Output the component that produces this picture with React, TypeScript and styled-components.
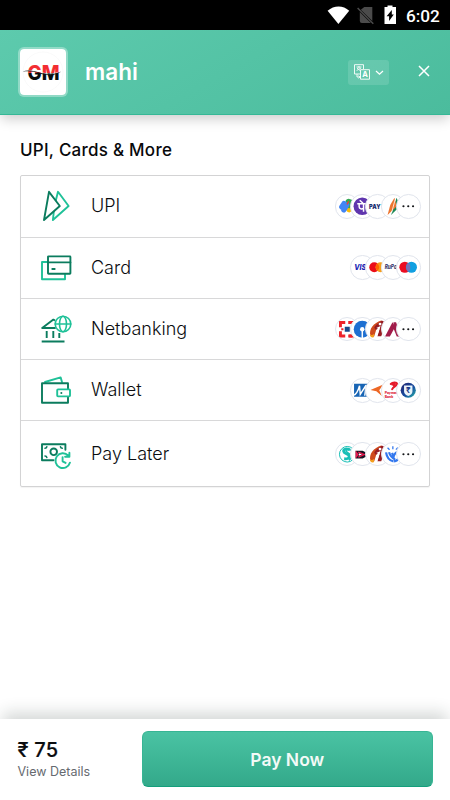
import React from "react";
import styled, { createGlobalStyle } from "styled-components";

const GlobalStyle = createGlobalStyle`
  * { box-sizing: border-box; }
  body { margin: 0; background: #fff; font-family: Inter, sans-serif; color: #0b0d10; }
  svg { display: block; flex: none; }
`;

const DARK = "#0b7c5e";
const LIGHT = "#1fc198";

const Screen = styled.div`
  display: flex;
  flex-direction: column;
  width: 450px;
  height: 800px;
  overflow: hidden;
  background: #fff;
`;

const StatusBar = styled.div`
  display: flex;
  align-items: center;
  justify-content: flex-end;
  flex: none;
  height: 30px;
  padding-right: 10px;
  background: #000;
`;

const Clock = styled.span`
  width: 34px;
  margin-left: 9px;
  padding-top: 2px;
  color: #fff;
  font: 500 17.2px/20px Roboto, sans-serif;
  white-space: nowrap;
`;

const Header = styled.header`
  display: flex;
  align-items: center;
  flex: none;
  height: 85px;
  padding: 0 18px 0 17.5px;
  background: linear-gradient(150deg, #5dcaad 0%, #4bbc9d 100%);
  border-bottom: 1px solid #35b896;
  box-shadow: 0 5px 12px -1px rgba(0, 0, 0, 0.2);
`;

const LogoTile = styled.div`
  display: flex;
  align-items: center;
  justify-content: center;
  width: 50px;
  height: 50px;
  background: #fff;
  background-clip: padding-box;
  border: 2.5px solid rgba(255, 255, 255, 0.34);
  border-radius: 6px;
`;

const Merchant = styled.h1`
  flex: 1;
  margin: 0 0 0 17.5px;
  color: #fff;
  font-size: 22.5px;
  font-weight: 600;
  line-height: 28px;
`;

const LanguageButton = styled.button`
  display: flex;
  align-items: center;
  gap: 4px;
  width: 41px;
  height: 25px;
  margin-right: 27px;
  padding: 0 0 0 5px;
  background: rgba(255, 255, 255, 0.13);
  border: 0;
  border-radius: 3px;
`;

const CloseButton = styled.button`
  width: 16px;
  height: 16px;
  padding: 0;
  margin-bottom: 3px;
  background: none;
  border: 0;
`;

const Content = styled.main`
  flex: 1;
  padding: 24px 20px 0;
`;

const SectionTitle = styled.h2`
  margin: 0 0 14px;
  color: #08090b;
  font-size: 17px;
  font-weight: 500;
  line-height: 22px;
  letter-spacing: 0.25px;
`;

const MethodList = styled.div`
  border: 1px solid #d3d3d4;
  border-radius: 2px;
  box-shadow: 0 1px 1px rgba(0, 0, 0, 0.05);
`;

const MethodRow = styled.div<{ $height: number }>`
  display: flex;
  align-items: center;
  height: ${(p) => p.$height}px;
  padding: 0 8.5px 0 19px;
  border-bottom: 1px solid #d8d8d9;
  &:last-child { border-bottom: 0; }
`;

const MethodName = styled.span`
  flex: 1;
  margin-left: 19px;
  font-size: 18px;
  font-weight: 300;
  line-height: 24px;
`;

const Badges = styled.div`
  display: flex;
`;

const Badge = styled.div`
  display: flex;
  width: 24.5px;
  height: 24.5px;
  background: #fff;
  border: 1px solid #e1e5ed;
  border-radius: 50%;
  overflow: hidden;
  & + & { margin-left: -9.2px; }
`;

const Footer = styled.footer`
  display: flex;
  flex: none;
  height: 81px;
  padding: 12px 17.5px 0;
  background: #fff;
  box-shadow: 0 -9px 15px -3px rgba(28, 40, 36, 0.19);
`;

const Total = styled.div`
  width: 124.5px;
  padding-top: 7px;
`;

const Amount = styled.div`
  font-size: 20px;
  font-weight: 500;
  line-height: 25px;
  letter-spacing: 0.25px;
  -webkit-text-stroke: 0.2px currentColor;
`;

const Details = styled.div`
  margin-top: 1px;
  color: #666a70;
  font-size: 12.5px;
  line-height: 16px;
`;

const PayButton = styled.button`
  flex: 1;
  height: 56px;
  padding: 0;
  color: #f3faf7;
  background: linear-gradient(#4ac3a3, #33a98a);
  border: 1px solid #37b594;
  border-bottom-color: #149f7c;
  border-radius: 6px;
  font: 600 17.5px Inter, sans-serif;
`;

const stroke = { fill: "none", strokeWidth: 1.9, strokeLinejoin: "round", strokeLinecap: "round" } as const;

const methodIcons: Record<string, React.ReactNode> = {
  upi: (
    <>
      <path stroke={LIGHT} d="M18 1.8 28.6 16 12.9 30 14.4 16Z" />
      <path stroke={DARK} fill="#fff" d="M9 1.8 19.8 16 4 30Z" />
    </>
  ),
  card: (
    <>
      <path stroke={LIGHT} d="M7 10H2v17.2h23v-4.5" />
      <rect stroke={DARK} x="8" y="4.4" width="22.4" height="17.4" rx="0.5" />
      <path stroke={DARK} d="M8 10.4h22.4M12.3 17h2.4" />
    </>
  ),
  bank: (
    <>
      <path stroke={DARK} strokeLinecap="butt" d="M15.7 15H2.2L13.4 6.6 15 7.5M6.7 18V25M13.3 18V25M19.3 20V25M1.7 28.5h22.8" />
      <g stroke={LIGHT} strokeWidth="1.6">
        <circle cx="23" cy="11" r="7.8" />
        <ellipse cx="23" cy="11" rx="3.5" ry="7.8" />
        <path d="M15.2 11h15.6" />
      </g>
    </>
  ),
  wallet: (
    <>
      <path stroke={LIGHT} d="m5 8 15.6-4.6L22 8" />
      <path stroke={DARK} d="M28 15V9.3H2v19.5h26V23" />
      <rect stroke={LIGHT} x="17.2" y="15.4" width="12.8" height="7" rx="0.8" />
      <path stroke={DARK} d="M21.3 19h.1" />
    </>
  ),
  later: (
    <>
      <path stroke={DARK} d="M13.5 22.2H2V6.2h23.4v5.5" />
      <circle stroke={DARK} cx="13.7" cy="13.8" r="3.3" />
      <path stroke={DARK} strokeWidth="1.6" d="M5 10.2c1 0 1.6-.5 1.8-1.4M20.5 8.8c.2 1 .8 1.4 1.8 1.4M5 18c1 0 1.6.5 1.8 1.4" />
      <path stroke={LIGHT} d="M28.2 17.5A7.4 7.4 0 1 0 30 24.6M29.4 14.8v4h-4.3M22.6 19.1v4.2l3 1.6" />
    </>
  ),
};

const MethodIcon = ({ name }: { name: string }) => (
  <svg width="32" height="32" viewBox="0 0 32 32" {...stroke}>
    {methodIcons[name]}
  </svg>
);

const flame = (
  <>
    <path d="M5.2 18.5C3.3 12 8.5 5.5 16 3.3c1 3-3 3-4.5 7.5L9 19c-1.5 1-3 1-3.8-.5Z" fill="#cf4a1d" />
    <path d="M4.8 16.5c.7 1.8 2.4 1.7 4.2 0L8.4 20c-2 .8-4-.8-3.6-3.5Z" fill="#f5a01b" />
    <path d="M9 10.5c2-4 5.5-5 7.5-7.2 3.2.8 3.5 4.2 2.5 7L16 19h-4l2.5-8-4 1.5Z" fill="#981c22" />
    <circle cx="14.8" cy="6.8" r="1.4" fill="#fff" />
    <path d="m11 10.8 4.3-2-3.3 10.4h-2.2l2.6-8.3Z" fill="#fff" />
  </>
);

const brandMarks: Record<string, React.ReactNode> = {
  gpay: (
    <g strokeWidth="5.2" strokeLinecap="round">
      <path d="m13 7.2 2.3 4" stroke="#34a853" />
      <path d="m13.8 15.5 2-3.5" stroke="#fbbc04" />
      <path d="M14.8 7.5v4" stroke="#34a853" />
      <path d="m6.5 12.7 2.2-3.4" stroke="#4285f4" />
      <path d="m8.6 15.8 2.9-5" stroke="#4285f4" />
      <path d="m12 9.6 1.2-2" stroke="#ea4335" strokeWidth="1.5" />
    </g>
  ),
  phonepe: (
    <>
      <circle cx="12" cy="12" r="8.7" fill="#5f35ae" />
      <path d="M7 9.4h8.5M13.3 9.4v8M8.9 9.4v3.1c0 2.4 2.7 2.5 4.4 1.6M12.8 9l-3.3-3" fill="none" stroke="#fff" strokeWidth="1.5" />
    </>
  ),
  paytm: (
    <>
      <defs>
        <linearGradient id="wordmark" gradientUnits="userSpaceOnUse" x1="4" y1="0" x2="20" y2="0">
          <stop offset=".66" stopColor="#172e70" /><stop offset=".66" stopColor="#1eb5e9" />
        </linearGradient>
      </defs>
      <text x="3.8" y="14.3" fontSize="5.6" fontWeight="900" fill="url(#wordmark)">PAYTM</text>
    </>
  ),
  bhim: (
    <>
      <path d="m15.3 3.5 3.4 8.5-8.9 8.8Z" fill="#1b8754" />
      <path d="m13.2 3.5 2.3 8.5-9.2 8.8 2.7-10Z" fill="#ed752e" />
      <path d="m14 5-3.8 14" stroke="#fff" strokeWidth=".8" />
    </>
  ),
  more: (
    <g fill="#15171a"><circle cx="7.2" cy="12" r="1.1" /><circle cx="12" cy="12" r="1.1" /><circle cx="16.8" cy="12" r="1.1" /></g>
  ),
  visa: (
    <text x="4" y="15" fontSize="8" fontWeight="800" fontStyle="italic" fill="#1724b5" textLength="17" lengthAdjust="spacingAndGlyphs">VISA</text>
  ),
  mastercard: (
    <><circle cx="9" cy="12" r="5" fill="#eb0d18" /><circle cx="15.3" cy="12" r="5" fill="#f79e1b" /><path d="M12.2 8.2a5 5 0 0 1 0 7.6 5 5 0 0 1 0-7.6Z" fill="#ff6500" /></>
  ),
  rupay: (
    <text x="3.5" y="14" fontSize="5.6" fontWeight="800" fontStyle="italic" fill="#34366c" textLength="15" lengthAdjust="spacingAndGlyphs">RuPay</text>
  ),
  maestro: (
    <><circle cx="8.6" cy="12" r="5.5" fill="#eb0d22" /><circle cx="15.2" cy="12" r="5.5" fill="#109fe1" /><path d="M12 7.6a5.5 5.5 0 0 1 0 8.8 5.5 5.5 0 0 1 0-8.8Z" fill="#7673b8" /></>
  ),
  kotak: (
    <>
      <path d="M10 5.2H5.2V10M5.2 14v4.8H10M14 5.2h4.8V10M14 18.8h4.8V14" fill="none" stroke="#ed232a" strokeWidth="2.9" />
      <path d="M6 10.9h2.2v2.2H6z" fill="#ed232a" />
      <path d="M13 3.8h4v2.9h-4zM13 17.3h4v2.9h-4z" fill="#ed232a" />
      <path d="M9.5 9.5h5v5h-5Z" fill="#174788" />
    </>
  ),
  sbi: (
    <><circle cx="12" cy="12" r="8.5" fill="#1d6fd1" /><circle cx="12" cy="12" r="2.2" fill="#fff" /><path d="M11.3 13h1.5v8h-1.5z" fill="#fff" /></>
  ),
  icici: flame,
  axis: (
    <><path d="m11.2 5 2.8 4.4-5.4 9.8H3.8Z" fill="#a11c4a" /><path d="M12.2 5h2.6l5.3 14.2h-4.6l-2.8-7Z" fill="#a11c4a" /></>
  ),
  mobikwik: (
    <><path d="M3.8 5.5h16.4v13H3.8Z" fill="#1764b4" /><path d="M3.8 16.8c2.8-1.2 4-4.2 5.5-9.3l.7 8.6L15.8 7l-1.3 10.5M18 6l-.8 13" fill="none" stroke="#fff" strokeWidth="1.4" /></>
  ),
  freecharge: (
    <path d="M5.2 11.8 18 6.2l-4 5.7 2.6 5.9-5.5-4.7Z" fill="#ed6725" />
  ),
  airtel: (
    <>
      <path d="M9.5 5.7c2-2.2 6.5-2 6.3.2-.2 2-4.1 2.4-4.9 5.1M11 6.3c2-1 3.5-.5 1.6 1.2" fill="none" stroke="#e51b2b" strokeWidth="2" strokeLinecap="round" />
      <text x="3.5" y="15.4" fontSize="3.4" fontWeight="800" fill="#dc2331">Payments</text>
      <text x="3.5" y="19.4" fontSize="3.4" fontWeight="800" fill="#dc2331">Bank</text>
    </>
  ),
  rupee: (
    <>
      <defs><linearGradient id="coin" x2="1" y2="1"><stop stopColor="#26236b" /><stop offset=".55" stopColor="#164ba0" /><stop offset="1" stopColor="#2bb9a6" /></linearGradient></defs>
      <circle cx="12" cy="12" r="7.6" fill="url(#coin)" />
      <path d="M7.8 7.3h8.4v6c0 2-1.8 3.5-4.2 4.5-2.4-1-4.2-2.5-4.2-4.5Z" fill="#e9f3fa" />
      <text x="12" y="15" textAnchor="middle" fontSize="8" fontWeight="700" fill="#1c3a87">₹</text>
    </>
  ),
  simpl: (
    <>
      <path d="M14.6 7.6C11.5 6 8.2 6.7 8.4 9c.3 2.6 5.5 2.4 5.5 5.2 0 2-2.2 2.6-5 2.3" fill="none" stroke="#19bfb6" strokeWidth="2.8" />
      <circle cx="12" cy="12" r="7.8" fill="none" stroke="#19bfb6" strokeWidth="1" />
      <path d="M16.4 8.2c-3-1.6-5.6-1.2-5.6.4 0 1.8 5.3 2.5 5.3 5.8 0 1.8-1 2.8-2.5 3.6" fill="none" stroke="#19bfb6" strokeWidth="1.5" />
    </>
  ),
  lazypay: (
    <><path d="M5.4 8.5h7l7.2 3.8-7.2 4h-7Z" fill="#171422" /><path d="m5.4 8.3 3.2 3.9-3.2 4.3Z" fill="#eb174e" /><path d="m8 9.8 6 2.5-6 2.5" fill="none" stroke="#eb174e" strokeWidth="1.3" /><path d="m8.6 11 3.2 1.3-3.2 1.3Z" fill="#fff" /></>
  ),
  hands: (
    <g fill="none" stroke="#3478ee" strokeWidth="2.2">
      <path d="M4.8 10.2c.7 5 3 8.2 7.5 9M7.8 10c1 3.5 3 5.5 6 7.3M18.5 8.7c1 5-1 9.8-5.7 10.5M15.8 9.7c-2.5 1.8-4 3.8-3.5 7M10.8 10.6l1.3 3" />
      <path strokeWidth="1.3" d="M11.6 4v3M6.3 5.5l2 2M16.5 5.4l-1.8 2" />
    </g>
  ),
};

const BrandMark = ({ name }: { name: string }) => (
  <svg width="22.5" height="22.5" viewBox="0.75 0.75 22.5 22.5" fontFamily="Inter, sans-serif">
    {brandMarks[name]}
  </svg>
);

const methods = [
  { label: "UPI", icon: "upi", height: 61.6, brands: ["gpay", "phonepe", "paytm", "bhim", "more"] },
  { label: "Card", icon: "card", height: 61.3, brands: ["visa", "mastercard", "rupay", "maestro"] },
  { label: "Netbanking", icon: "bank", height: 61.3, brands: ["kotak", "sbi", "icici", "axis", "more"] },
  { label: "Wallet", icon: "wallet", height: 61.2, brands: ["mobikwik", "freecharge", "airtel", "rupee"] },
  { label: "Pay Later", icon: "later", height: 65.1, brands: ["simpl", "lazypay", "icici", "hands", "more"] },
];

export default function App() {
  return (
    <>
      <GlobalStyle />
      <Screen>
        <StatusBar>
          <svg width="70" height="22" viewBox="0 0 70 22" fill="#fff">
            <path d="M.6 6.7C7 1 16.2 1 22.2 6.7L11.4 20Z" />
            <g transform="translate(.8 0)">
              <path d="M36.5 3H44.5v14L33 5.8Z" fill="#4b4b4b" />
              <path d="M32 8 43 19H34q-2 0-2-2.2Z" fill="#4b4b4b" />
              <path d="m29.8 4 15.7 15.7" stroke="#4b4b4b" strokeWidth="1.5" />
            </g>
            <path d="M60.5 1.5h5V3H69v17H57.5V3h3Z" />
            <path d="M64.8 6v4.5h2L62.1 17v-4.7h-2.5Z" fill="#000" />
          </svg>
          <Clock>6:02</Clock>
        </StatusBar>
        <Header>
          <LogoTile>
            <svg width="44" height="44" viewBox="0 0 44 44">
              <defs>
                <linearGradient id="split" gradientUnits="userSpaceOnUse" x1="0" y1="14" x2="0" y2="30">
                  <stop offset=".54" stopColor="#f32e32" /><stop offset=".54" stopColor="#0c0c0c" />
                </linearGradient>
              </defs>
              <circle cx="22" cy="22" r="20" fill="none" stroke="#f7f7f7" strokeWidth=".6" />
              <text x="6.5" y="29.6" fontFamily="Inter, sans-serif" fontSize="20.5" fontWeight="800" textLength="32" lengthAdjust="spacingAndGlyphs" fill="url(#split)">GM</text>
              <path d="M6 20.6c5-.4 10 .5 15 2 6 2 11 1.6 16-.4" fill="none" stroke="#fff" strokeWidth=".6" />
              <path d="M1.5 21.5c6-2 12-.5 18.5 1.6 7 2 12 1.6 20.5-1.6-6 4-14 4.6-21 2.2-7-2.5-11-2.9-18-2.2Z" fill="#111" />
            </svg>
          </LogoTile>
          <Merchant>mahi</Merchant>
          <LanguageButton aria-label="Language">
            <svg width="18" height="18" viewBox="0 0 18 18" fill="none" stroke="#f0faf7">
              <path d="M7 11H1.5V1.7h9v4.5M3.5 4h5M6 3v2M3.6 7.5 8 5M4 5l3 2.5M4 11v3h2.5M5.5 12.7 7 14l-1.5 1.3" />
              <path d="M7.5 6.7h9v9.5h-9Z" />
              <text x="12" y="14.2" textAnchor="middle" fontFamily="Inter, sans-serif" fontSize="7.5" fontWeight="700" fill="#fff" stroke="none">A</text>
            </svg>
            <svg width="9" height="7" viewBox="0 0 9 7" fill="none" stroke="#fff" strokeWidth="1.2"><path d="m1 2 3.5 3.3L8 2" /></svg>
          </LanguageButton>
          <CloseButton aria-label="Close">
            <svg width="16" height="16" viewBox="0 0 16 16" stroke="#fff" strokeWidth="1.5"><path d="m3 3 10 10M13 3 3 13" /></svg>
          </CloseButton>
        </Header>
        <Content>
          <SectionTitle>UPI, Cards &amp; More</SectionTitle>
          <MethodList>
            {methods.map((m) => (
              <MethodRow key={m.label} $height={m.height}>
                <MethodIcon name={m.icon} />
                <MethodName>{m.label}</MethodName>
                <Badges>
                  {m.brands.map((b) => <Badge key={b}><BrandMark name={b} /></Badge>)}
                </Badges>
              </MethodRow>
            ))}
          </MethodList>
        </Content>
        <Footer>
          <Total>
            <Amount>₹ 75</Amount>
            <Details>View Details</Details>
          </Total>
          <PayButton>Pay Now</PayButton>
        </Footer>
      </Screen>
    </>
  );
}
